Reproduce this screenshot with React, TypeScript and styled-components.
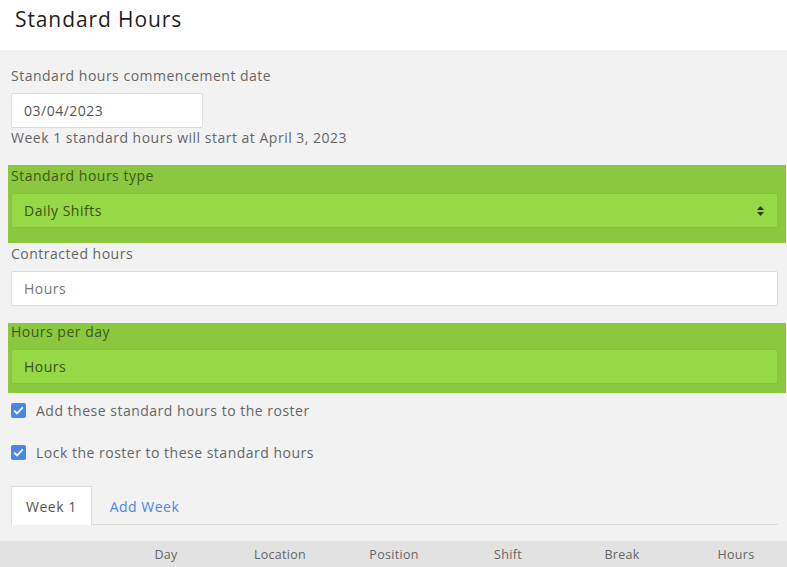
import React from 'react';
import styled, { createGlobalStyle } from 'styled-components';

const GlobalStyle = createGlobalStyle`
  html, body {
    margin: 0;
    padding: 0;
    background: #f2f2f2;
    font-family: "Open Sans", "Noto Sans", sans-serif;
  }
  * { box-sizing: border-box; }
`;

const Page = styled.div`
  width: 787px;
  height: 567px;
  overflow: hidden;
  background: #f2f2f2;
  letter-spacing: 0.5px;
`;

const Header = styled.div`
  height: 50px;
  background: #ffffff;
  padding: 5px 15px 0;
`;

const Title = styled.h1`
  margin: 0;
  font-size: 21px;
  line-height: 28px;
  font-weight: 400;
  letter-spacing: 0.9px;
  color: #1f1f1f;
`;

const Form = styled.div`
  padding: 17px 1px 0 8px;
`;

const Field = styled.div<{ highlight?: boolean; pad?: string }>`
  padding: ${({ pad }) => pad || '0 8px 0 3px'};
  background: ${({ highlight }) => (highlight ? '#8cc83f' : 'transparent')};
`;

const Label = styled.div<{ highlight?: boolean }>`
  font-size: 14px;
  line-height: 18px;
  color: ${({ highlight }) => (highlight ? '#3d5a1a' : '#666666')};
  margin-bottom: 8px;
`;

const Input = styled.div<{ highlight?: boolean; width?: number; muted?: boolean }>`
  height: 35px;
  width: ${({ width }) => (width ? `${width}px` : '100%')};
  background: ${({ highlight }) => (highlight ? '#96d845' : '#ffffff')};
  border: 1px solid ${({ highlight }) => (highlight ? '#86c23c' : '#dcdcdc')};
  border-radius: 2px;
  padding: 0 12px;
  display: flex;
  align-items: center;
  justify-content: space-between;
  font-size: 14px;
  color: ${({ highlight, muted }) =>
    highlight ? '#3a5218' : muted ? '#777777' : '#555555'};
`;

const Help = styled.div`
  font-size: 14px;
  line-height: 18px;
  color: #666666;
  margin-top: 1px;
  margin-bottom: 18px;
`;

const Spacer = styled.div<{ h: number }>`
  height: ${({ h }) => h}px;
`;

const CheckRow = styled.label`
  display: flex;
  align-items: center;
  gap: 10px;
  padding: 0 3px;
  font-size: 14px;
  color: #666666;
  height: 18px;
`;

const Box = styled.span`
  width: 15px;
  height: 15px;
  border-radius: 2px;
  background: #4a86e8;
  display: inline-flex;
  align-items: center;
  justify-content: center;
`;

const Tabs = styled.div`
  display: flex;
  align-items: flex-end;
  margin: 0 9px 0 11px;
  border-bottom: 1px solid #dcdcdc;
  height: 39px;
`;

const Tab = styled.div<{ active?: boolean }>`
  height: 39px;
  padding: 0 ${({ active }) => (active ? 14 : 17)}px;
  display: flex;
  align-items: center;
  font-size: 14px;
  color: ${({ active }) => (active ? '#555555' : '#4a86e8')};
  background: ${({ active }) => (active ? '#ffffff' : 'transparent')};
  border: ${({ active }) => (active ? '1px solid #dcdcdc' : '1px solid transparent')};
  border-bottom: none;
  margin-bottom: -1px;
`;

const TableHead = styled.div`
  margin-top: 16px;
  height: 26px;
  background: #e2e2e2;
  display: grid;
  grid-template-columns: 109px repeat(6, 114px);
  align-items: center;
`;

const Th = styled.div`
  text-align: center;
  font-size: 12.5px;
  letter-spacing: 0.3px;
  color: #666666;
`;

const Caret = () => (
  <svg width="9" height="12" viewBox="0 0 9 12">
    <path d="M4.5 1 L8 5 H1 Z" fill="#2b3a18" />
    <path d="M4.5 11 L8 7 H1 Z" fill="#2b3a18" />
  </svg>
);

const Check = () => (
  <svg width="11" height="9" viewBox="0 0 11 9">
    <path d="M1.2 4.6 L4 7.4 L9.8 1.4" stroke="#ffffff" strokeWidth="1.8" fill="none" />
  </svg>
);

const App: React.FC = () => {
  const columns = ['', 'Day', 'Location', 'Position', 'Shift', 'Break', 'Hours'];

  return (
    <Page>
      <GlobalStyle />
      <Header>
        <Title>Standard Hours</Title>
      </Header>
      <Form>
        <Field>
          <Label>Standard hours commencement date</Label>
          <Input width={192}>03/04/2023</Input>
          <Help>Week 1 standard hours will start at April 3, 2023</Help>
        </Field>

        <Field highlight pad="2px 8px 15px 3px">
          <Label highlight>Standard hours type</Label>
          <Input highlight>
            Daily Shifts
            <Caret />
          </Input>
        </Field>

        <Spacer h={2} />
        <Field>
          <Label>Contracted hours</Label>
          <Input muted>Hours</Input>
        </Field>

        <Spacer h={17} />
        <Field highlight pad="0 8px 9px 3px">
          <Label highlight>Hours per day</Label>
          <Input highlight>Hours</Input>
        </Field>

        <Spacer h={8} />
        <CheckRow>
          <Box><Check /></Box>
          Add these standard hours to the roster
        </CheckRow>
        <Spacer h={24} />
        <CheckRow>
          <Box><Check /></Box>
          Lock the roster to these standard hours
        </CheckRow>
      </Form>
      <Spacer h={25} />
      <Tabs>
        <Tab active>Week 1</Tab>
        <Tab>Add Week</Tab>
      </Tabs>
      <TableHead>
        {columns.map((c, i) => (
          <Th key={i}>{c}</Th>
        ))}
      </TableHead>
    </Page>
  );
};

export default App;
